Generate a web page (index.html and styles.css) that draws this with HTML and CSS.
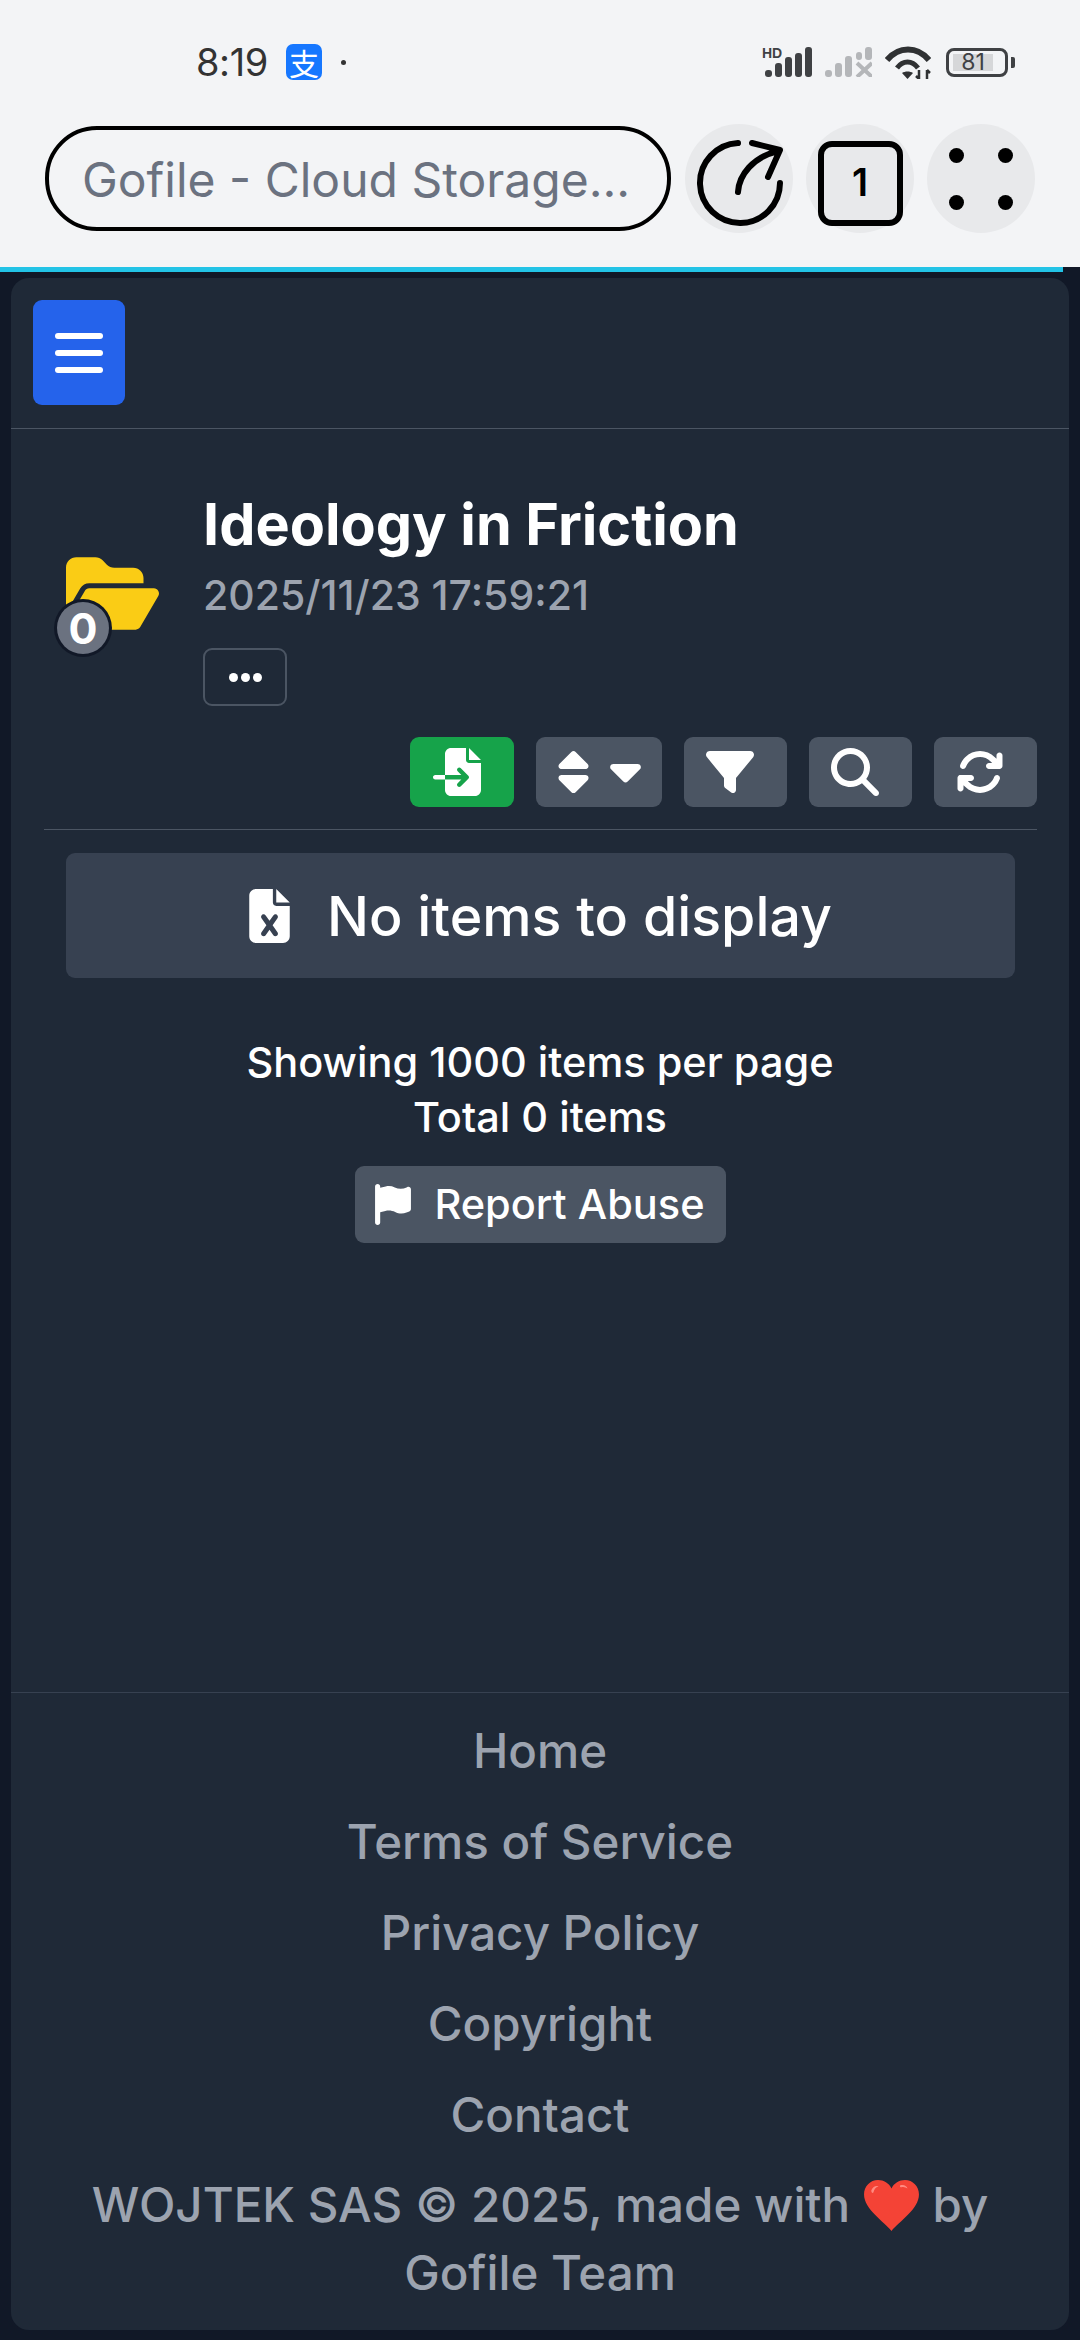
FILE: index.html
```html
<!DOCTYPE html>
<html lang="en">
<head>
<meta charset="utf-8">
<title>Gofile</title>
<link rel="stylesheet" href="styles.css">
</head>
<body>
<header class="chrome">
  <div class="status">
    <span class="time">8:19</span>
    <span class="alipay">支</span>
    <span class="dot"></span>
    <span class="status-icons">
      <svg class="sig" viewBox="0 0 50 30"><text x="0" y="11" class="hd">HD</text><g fill="#3f4144"><rect x="3" y="23" width="7" height="7" rx="3"/><rect x="13" y="16" width="7" height="14" rx="3"/><rect x="23" y="10" width="7" height="20" rx="3"/><rect x="33" y="6" width="7" height="24" rx="3"/><rect x="43" y="0" width="7" height="30" rx="3"/></g></svg>
      <svg class="sig2" viewBox="0 0 47 30"><g fill="#b4b6b9"><rect x="0" y="23" width="7" height="7" rx="3"/><rect x="10" y="16" width="7" height="14" rx="3"/><rect x="20" y="9" width="7" height="21" rx="3"/><rect x="31" y="5" width="6" height="8" rx="3"/><rect x="40" y="0" width="7" height="13" rx="3"/></g><path d="M32 16l15 14M47 16L32 30" stroke="#b4b6b9" stroke-width="4" fill="none"/></svg>
      <svg class="wifi" viewBox="0 0 46 33"><g fill="none" stroke="#2f3133"><path stroke-width="6" d="M2 14C14 0 32 0 44 14"/><path stroke-width="5" d="M12 22c6-8 15-8 21 0"/></g><path d="M17 27c3-2 8-2 11 0l-5.500 6z" fill="#2f3133"/><path d="M34 24v9M31 30l3 3M42 24v9M42 24l3 3" stroke="#2f3133" stroke-width="2.500" fill="none"/></svg>
      <span class="battery"><span class="battery-body"><span class="battery-level">81</span></span><span class="battery-nub"></span></span>
    </span>
  </div>
  <div class="toolbar-browser">
    <div class="address">Gofile - Cloud Storage...</div>
    <span class="round">
      <svg class="reload" viewBox="0 0 92 92"><path d="M43 6A40 40 0 1 0 85 46" fill="none" stroke="#000" stroke-width="6" stroke-linecap="round"/><path d="M43 55C44 38 58 20 83 14M57 6L85 13L73 40" fill="none" stroke="#000" stroke-width="6" stroke-linecap="round" stroke-linejoin="round"/></svg>
    </span>
    <span class="round"><span class="tabcount">1</span></span>
    <span class="round dots"><i></i><i></i><i></i><i></i></span>
  </div>
</header>
<div class="accent"></div>
<div class="page">
  <main class="card">
    <nav class="nav">
      <button class="menu"><span></span><span></span><span></span></button>
    </nav>
    <section class="hero">
      <div class="folder">
        <svg viewBox="0 0 576 512"><path fill="#facc15" d="M88.7 223.8L0 375.8V96C0 60.7 28.7 32 64 32H181.5c17 0 33.3 6.7 45.3 18.7l26.5 26.5c12 12 28.3 18.7 45.3 18.7H416c35.3 0 64 28.7 64 64v32H144c-22.8 0-43.8 12.1-55.3 31.8zm27.6 16.1C122.1 230 132.6 224 144 224H544c11.5 0 22 6.1 27.7 16.1s5.7 22.2-.1 32.1l-112 192C453.9 474 443.4 480 432 480H32c-11.5 0-22-6.1-27.7-16.1s-5.7-22.2 .1-32.1l112-192z"/></svg>
        <span class="badge">0</span>
      </div>
      <div class="hero-text">
        <h1>Ideology in Friction</h1>
        <p class="date">2025/11/23 17:59:21</p>
        <button class="more"><i></i><i></i><i></i></button>
      </div>
    </section>
    <div class="actions">
      <button class="act green"><svg class="i-std" viewBox="0 0 512 512"><path d="M128 64c0-35.3 28.7-64 64-64H352V128c0 17.7 14.3 32 32 32H512V448c0 35.3-28.7 64-64 64H192c-35.3 0-64-28.7-64-64V336H302.1l-39 39c-9.4 9.4-9.4 24.6 0 33.9s24.6 9.4 33.9 0l80-80c9.4-9.4 9.4-24.6 0-33.9l-80-80c-9.4-9.4-24.6-9.4-33.9 0s-9.4 24.6 0 33.9l39 39H128V64zm0 224v48H24c-13.3 0-24-10.7-24-24s10.7-24 24-24H128zM512 128H384V0L512 128z"/></svg></button>
      <button class="act wide"><svg class="i-sort" viewBox="0 0 320 512"><path d="M137.4 41.4c12.5-12.5 32.8-12.5 45.3 0l128 128c9.2 9.2 11.9 22.9 6.9 34.9s-16.6 19.8-29.6 19.8H32c-12.9 0-24.6-7.8-29.6-19.8s-2.2-25.7 6.9-34.9l128-128zm0 429.3l-128-128c-9.2-9.2-11.9-22.9-6.9-34.9s16.6-19.8 29.6-19.8H288c12.9 0 24.6 7.8 29.6 19.8s2.2 25.7-6.9 34.9l-128 128c-12.5 12.5-32.8 12.5-45.3 0z"/></svg><svg class="i-caret" viewBox="0 160 320 240"><path d="M137.4 374.6c12.5 12.5 32.8 12.5 45.3 0l128-128c9.2-9.2 11.9-22.9 6.9-34.9s-16.6-19.8-29.6-19.8L32 192c-12.9 0-24.6 7.8-29.6 19.8s-2.2 25.7 6.9 34.9l128 128z"/></svg></button>
      <button class="act"><svg class="i-std" viewBox="0 0 512 512"><path d="M3.9 54.9C10.5 40.9 24.5 32 40 32H472c15.5 0 29.5 8.9 36.1 22.9s4.6 30.5-5.2 42.5L320 320.9V448c0 12.1-6.8 23.2-17.7 28.6s-23.8 4.3-33.5-3l-64-48c-8.1-6-12.8-15.5-12.8-25.6V320.9L9 97.3C-.7 85.4-2.8 68.8 3.9 54.9z"/></svg></button>
      <button class="act"><svg class="i-std" viewBox="0 0 512 512"><path d="M416 208c0 45.9-14.9 88.3-40 122.7L502.6 457.4c12.5 12.5 12.5 32.8 0 45.3s-32.8 12.5-45.3 0L330.7 376c-34.4 25.2-76.8 40-122.7 40C93.1 416 0 322.9 0 208S93.1 0 208 0S416 93.1 416 208zM208 352a144 144 0 1 0 0-288 144 144 0 1 0 0 288z"/></svg></button>
      <button class="act"><svg class="i-std" viewBox="0 0 512 512"><path d="M105.1 202.6c7.7-21.8 20.2-42.3 37.8-59.8c62.5-62.5 163.8-62.5 226.3 0L386.3 160H352c-17.7 0-32 14.3-32 32s14.3 32 32 32H463.5c0 0 0 0 0 0h.4c17.7 0 32-14.3 32-32V80c0-17.7-14.3-32-32-32s-32 14.3-32 32v35.2L414.4 97.6c-87.5-87.5-229.3-87.5-316.8 0C73.2 122 55.6 150.7 44.8 181.4c-5.9 16.7 2.9 34.9 19.5 40.8s34.9-2.9 40.8-19.5zM39 289.3c-5 1.5-9.8 4.2-13.7 8.2c-4 4-6.7 8.8-8.1 14c-.3 1.2-.6 2.5-.8 3.8c-.3 1.7-.4 3.4-.4 5.1V432c0 17.7 14.3 32 32 32s32-14.3 32-32V396.9l17.6 17.5 0 0c87.5 87.4 229.3 87.4 316.7 0c24.4-24.4 42.1-53.1 52.9-83.7c5.9-16.7-2.9-34.9-19.5-40.8s-34.9 2.9-40.8 19.5c-7.7 21.8-20.2 42.3-37.8 59.8c-62.5 62.5-163.8 62.5-226.3 0l-.1-.1L125.6 352H160c17.7 0 32-14.3 32-32s-14.3-32-32-32H48.4c-1.6 0-3.2 .1-4.8 .3s-3.1 .5-4.6 1z"/></svg></button>
    </div>
    <hr class="rule">
    <div class="empty">
      <svg viewBox="0 0 384 512"><path d="M64 0C28.7 0 0 28.7 0 64V448c0 35.3 28.7 64 64 64H320c35.3 0 64-28.7 64-64V160H256c-17.7 0-32-14.3-32-32V0H64zM256 0V128H384L256 0zM155.7 250.2L192 302.1l36.3-51.9c7.6-10.9 22.6-13.5 33.4-5.9s13.5 22.6 5.9 33.4L221.3 344l46.4 66.2c7.6 10.9 5 25.8-5.9 33.4s-25.8 5-33.4-5.9L192 385.8l-36.3 51.9c-7.6 10.9-22.6 13.5-33.4 5.9s-13.5-22.6-5.9-33.4L162.7 344l-46.4-66.2c-7.6-10.9-5-25.8 5.9-33.4s25.8-5 33.4 5.9z"/></svg>
      <span>No items to display</span>
    </div>
    <div class="summary">
      <p>Showing 1000 items per page</p>
      <p>Total 0 items</p>
      <button class="report"><svg viewBox="0 0 448 512"><path d="M64 32C64 14.3 49.7 0 32 0S0 14.3 0 32V64 368 480c0 17.7 14.3 32 32 32s32-14.3 32-32V352l64.3-16.1c41.1-10.3 84.6-5.5 122.5 13.4c44.2 22.1 95.5 24.8 141.7 7.4l34.7-13c12.5-4.7 20.8-16.6 20.8-30V66.1c0-23-24.2-38-44.8-27.7l-9.6 4.8c-46.3 23.2-100.8 23.2-147.1 0c-35.1-17.6-75.4-22-113.5-12.5L64 48V32z"/></svg>Report Abuse</button>
    </div>
    <footer class="footer">
      <a>Home</a>
      <a>Terms of Service</a>
      <a>Privacy Policy</a>
      <a>Copyright</a>
      <a>Contact</a>
      <p class="copy"><span>WOJTEK SAS © 2025, made with</span> <svg class="heart" viewBox="0 0 55 49"><path fill="#f44336" d="M27.5 49C20 40 1 28 1 14 1 6 7 0 14.5 0 20 0 25 3 27.5 8 30 3 35 0 40.5 0 48 0 54 6 54 14 54 28 35 40 27.5 49z"/><path fill="#ff8a80" d="M8 10c1-3 4-5 7-4-3 1-4 3-5 6-1 1-2 0-2-2zM36 5c3-1 6 0 7 3-2-1-4-2-6-1-1 0-2-1-1-2z"/></svg> <span>by</span> <span>Gofile Team</span></p>
    </footer>
  </main>
</div>
</body>
</html>
```

FILE: styles.css
```css
* { box-sizing: border-box; }
html, body { margin: 0; padding: 0; }
body {
  width: 1080px;
  height: 2340px;
  display: flex;
  flex-direction: column;
  background: #111827;
  font-family: Inter, "Noto Sans", sans-serif;
  color: #fff;
  overflow: hidden;
}
button { border: 0; padding: 0; font: inherit; color: inherit; }
p, h1 { margin: 0; }

.chrome { height: 267px; background: #f3f4f6; color: #000; }
.status { height: 124px; display: flex; align-items: center; padding: 0 0 0 196px; }
.time { font-size: 38px; color: #333; width: 90px; letter-spacing: -0.4px; }
.alipay {
  width: 36px; height: 36px; border-radius: 7px; background: #1677ff; color: #fff;
  font: 30px/36px "Noto Sans CJK SC", sans-serif; text-align: center;
}
.dot { width: 5px; height: 5px; border-radius: 50%; background: #333; margin-left: 19px; }
.status-icons { margin-left: auto; margin-right: 65px; display: flex; align-items: center; }
.sig { width: 50px; height: 30px; overflow: visible; }
.hd { font: 700 14px "Liberation Sans", sans-serif; fill: #3f4144; }
.sig2 { width: 47px; height: 30px; margin-left: 13px; }
.wifi { width: 46px; height: 33px; margin-left: 13px; }
.battery { display: flex; align-items: center; margin-left: 15px; }
.battery-body { width: 62px; height: 29px; border: 3px solid #3f4144; border-radius: 8px; padding: 3px 12px 3px 4px; display: flex; }
.battery-level { flex: 1; background: #d6d7d9; font: 23px/17px Inter, sans-serif; color: #3f4144; text-align: center; }
.battery-nub { width: 4px; height: 11px; background: #3f4144; border-radius: 0 2px 2px 0; margin-left: 3px; }

.toolbar-browser { display: flex; align-items: center; padding-left: 45px; height: 109px; }
.address {
  width: 626px; height: 105px; border: 4px solid #000; border-radius: 52px;
  padding-left: 33px; font-size: 48px; line-height: 100px; color: #6b7280;
  white-space: nowrap;
}
.round {
  width: 108px; height: 109px; border-radius: 50%; background: #e8e9eb;
  display: flex; align-items: center; justify-content: center; margin-left: 13px; flex: none;
}
.address + .round { margin-left: 14px; }
.reload { width: 92px; height: 92px; margin: 9px 0 0 4px; flex: none; }
.tabcount {
  width: 85px; height: 85px; border: 6px solid #000; border-radius: 14px; margin-top: 9px;
  font-size: 38px; font-weight: 600; line-height: 71px; text-align: center;
}
.dots { display: grid; grid-template-columns: 15px 15px; grid-template-rows: 15px 15px; gap: 32px 34px; align-content: center; justify-content: center; align-items: stretch; }
.dots i { background: #000; border-radius: 50%; }

.accent { height: 5px; width: 1063px; background: #22c3e6; flex: none; }
.page { flex: 1; display: flex; padding: 6px 11px 10px; min-height: 0; }
.card { flex: 1; background: #1f2937; border-radius: 18px; display: flex; flex-direction: column; }

.nav { height: 151px; border-bottom: 1px solid #4b5563; padding: 22px; flex: none; }
.menu {
  width: 92px; height: 105px; border-radius: 9px; background: #2563eb;
  display: flex; flex-direction: column; align-items: center; justify-content: center; gap: 11px;
}
.menu span { width: 48px; height: 6px; border-radius: 3px; background: #fff; }

.hero { display: flex; align-items: center; padding: 59px 0 0 55px; }
.folder { position: relative; width: 93px; height: 83px; flex: none; margin-right: 44px; top: -4px; }
.folder svg { display: block; width: 93px; height: 83px; }
.badge {
  position: absolute; left: -9px; top: 50px; width: 52px; height: 52px; border-radius: 50%;
  background: #6b7280; box-shadow: 0 0 0 3px #111827; font-size: 43px; font-weight: 700;
  line-height: 52px; text-align: center;
}
h1 { font-size: 57.5px; font-weight: 700; line-height: 72px; white-space: nowrap; }
.date { font-size: 41px; font-weight: 500; line-height: 50px; color: #9ca3af; margin-top: 10px; }
.more {
  display: flex; gap: 3px; align-items: center; justify-content: center;
  width: 84px; height: 58px; margin-top: 28px; background: transparent;
  border: 2px solid #4b5563; border-radius: 9px;
}
.more i { width: 9px; height: 9px; border-radius: 50%; background: #fff; }

.actions { display: flex; justify-content: flex-end; gap: 22px; padding-right: 32px; margin-top: 31px; }
.act {
  width: 103px; height: 70px; border-radius: 9px; background: #4b5563; padding-right: 11px;
  display: flex; align-items: center; justify-content: center; gap: 21px;
}
.act svg { fill: #fff; display: block; }
.green { width: 104px; background: #16a34a; }
.wide { width: 126px; padding-right: 0; }
.i-sort { width: 31px; height: 48px; }
.i-caret { width: 31px; height: 23px; }
.i-std { width: 48px; height: 48px; }

.rule { border: 0; height: 1px; background: #4b5563; margin: 22px 32px 0 33px; }
.empty {
  margin: 23px 54px 0 55px; height: 125px; border-radius: 9px; background: #374151;
  display: flex; align-items: center; justify-content: center; gap: 37px; font-size: 55.5px; font-weight: 500;
}
.empty svg { width: 41px; height: 54px; fill: #fff; }

.summary { text-align: center; margin-top: 57px; font-size: 41.5px; font-weight: 500; line-height: 55px; }
.report {
  display: inline-flex; align-items: center; justify-content: center; gap: 23px;
  width: 371px; height: 77px; border-radius: 9px; background: #4b5563; margin-top: 21px;
  font-size: 41.5px; font-weight: 500; line-height: 55px;
}
.report svg { width: 36px; height: 41px; fill: #fff; }

.footer {
  margin-top: auto; border-top: 1px solid #374151; padding: 12px 60px 23px;
  display: flex; flex-direction: column; align-items: center; text-align: center;
  color: #9ca3af; font-size: 47.5px; font-weight: 500;
}
.footer a { line-height: 91px; }
.copy { line-height: 68px; margin-top: 11px; }
.heart { width: 57px; height: 51px; vertical-align: -9px; }
```
